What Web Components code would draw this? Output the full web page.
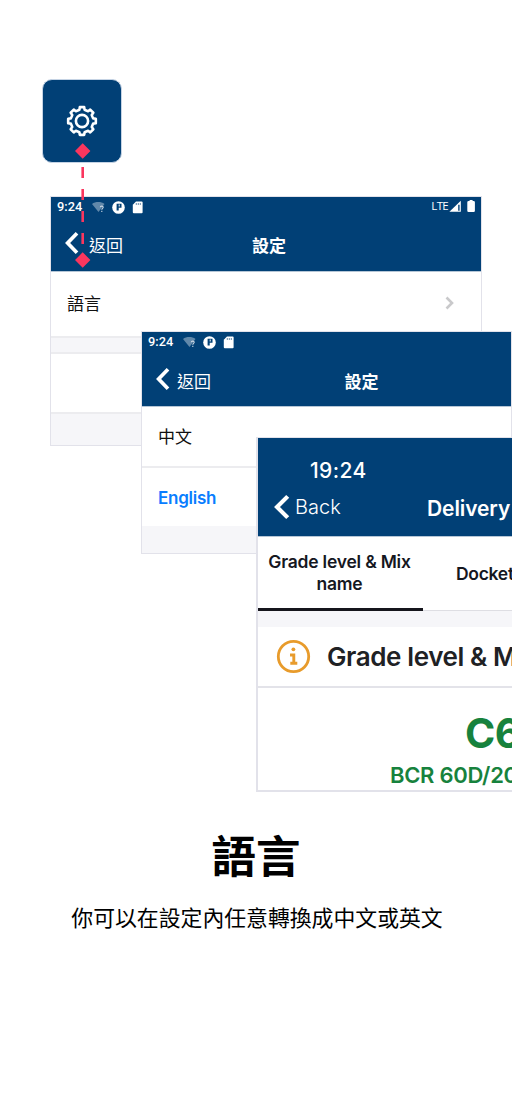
<!DOCTYPE html>
<html lang="zh-Hant">
<head>
<meta charset="utf-8">
<title>語言</title>
<style>
html,body{margin:0;background:#fff}
body{width:512px;height:1108px;overflow:hidden}
</style>
</head>
<body>
<language-guide></language-guide>
<script>
const define = (name, html) => customElements.define(name, class extends HTMLElement {
  constructor() {
    super();
    this.attachShadow({mode: 'open'}).innerHTML = html;
  }
});

define('settings-tile', `<style>
:host{box-sizing:border-box;display:flex;justify-content:center;width:80px;height:84px;padding-top:25px;border:1px solid #c5d3e4;border-radius:10px;background:#014076}
svg{width:32px;height:32px}</style>
<svg viewBox="-16 -16 32 32" fill="none" stroke="#fff" stroke-width="2.6" stroke-linejoin="round"><circle r="6.1"/><path id="gear"/></svg>`);

define('status-icons', `<style>
:host{display:flex;align-items:center;gap:7px}svg{display:block}</style>
<svg width="13" height="12" viewBox="0 0 13 12"><path d="M0 3C3.5 .4 9 .4 12.5 3L6.5 11z" fill="#fff" opacity=".38"/><path d="M8.3 6.3c0-1.6 2.9-1.6 2.9 0 0 1.1-1.4 1.2-1.4 2.4M9.8 9.7v1.2" fill="none" stroke="#c8d5e2" stroke-width="1.1"/></svg>
<svg width="13" height="13" viewBox="0 0 13 13"><circle cx="6.5" cy="6.5" r="6.3" fill="#fff"/><path d="M4.6 2.7h4.9v4.1H6.7v2.8H4.6z" fill="#014076"/><path d="M6.7 3.6h1v2h-1z" fill="#fff"/></svg>
<svg width="12" height="13" viewBox="0 0 12 13"><path d="M4 .5h5.6q1 0 1 1v9.7q0 1-1 1H1.8q-1 0-1-1V3.7z" fill="#fff"/><path d="M4.3 2v2M6.3 2v2M8.3 2v2" stroke="#6a8cab" stroke-width="1"/></svg>`);

define('signal-icons', `<style>
:host{display:flex;align-items:center;color:#fff;font:11.5px/14px "Open Sans","Noto Sans",sans-serif;letter-spacing:-.7px}svg{display:block}span{position:relative;top:-1px}</style>
<span>LTE</span><svg width="13" height="13" viewBox="0 0 13 13" style="margin:0 5px 1px 1px"><path d="M11.8 .8v11H.4z" fill="#fff"/><path d="M9.2 4.8h1.4v6H9.2z" fill="#014076"/></svg><svg width="9" height="13" viewBox="0 0 9 13" style="margin-bottom:2px"><path d="M2.6 0h3v1h1q1.3 0 1.3 1.2v8.6q0 1.2-1.2 1.2H1.5Q.3 12 .3 10.8V2.2Q.3 1 1.6 1h1z" fill="#fff"/></svg>`);

define('back-chevron', `<style>:host{display:block;width:14px;height:24px}svg{display:block;width:100%;height:100%}</style>
<svg viewBox="0 0 14 24" preserveAspectRatio="none"><path d="M12 2.2L2.6 12l9.4 9.8" fill="none" stroke="#fff" stroke-width="3.7"/></svg>`);

define('android-header', `<style>
:host{display:block;height:75px;background:#014076;color:#fff;border-bottom:1px solid #b5c6d6;box-sizing:border-box}
.status{display:flex;align-items:center;height:20px;padding:0 5px 0 6px;font:500 12.8px/20px Roboto,sans-serif}
status-icons{margin-left:10px}::slotted([slot=signal]){margin-left:auto}
.nav{display:grid;grid-template-columns:1fr auto 1fr;align-items:center;height:54px;font:17px/25px "Noto Sans CJK TC",sans-serif;padding:var(--nav-pad,0) 0 0 14px}
.back{display:flex;align-items:center;gap:var(--back-gap,10px)}
back-chevron{margin-bottom:2px}
.title{font-weight:700;margin-left:var(--title-shift,-8px)}
</style><div class="status"><span>9:24</span><status-icons></status-icons><slot name="signal"></slot></div>
<div class="nav"><div class="back"><back-chevron></back-chevron><slot name="back"></slot></div><div class="title"><slot name="title"></slot></div></div>`);

define('list-row', `<style>
:host{box-sizing:border-box;display:flex;align-items:center;justify-content:space-between;height:var(--h,65px);padding:0 27px 2px 16px;background:#fff;color:#101010;font:17px/25px "Noto Sans CJK TC",sans-serif}
:host([selected]){color:#087dff;font:600 17px/20px Inter,sans-serif;letter-spacing:-.25px;padding-bottom:0;padding-top:2px}
:host([line]){border-bottom:2px solid #ececef}
</style><slot></slot><slot name="end"></slot>`);

define('section-gap', `<style>:host{display:block;box-sizing:border-box;height:var(--h,16px);background:#f6f6f9}
:host([line]){border-bottom:2px solid #ececef}</style>`);

define('settings-screen', `<style>
:host{position:absolute;box-sizing:border-box;left:50px;top:196px;width:432px;height:250px;border:1px solid #e2e2ea;background:#f6f6f9}
svg{display:block;width:9px;height:14px}.label{margin-top:-2px}</style>
<android-header><signal-icons slot="signal"></signal-icons><span slot="back">返回</span><span slot="title">設定</span></android-header>
<list-row line style="--h:66px"><span class="label">語言</span><svg slot="end" viewBox="0 0 9 14"><path d="M1.5 1.5L7 7l-5.5 5.5" fill="none" stroke="#c9c9cb" stroke-width="2.6"/></svg></list-row>
<section-gap line></section-gap>
<list-row line style="--h:60px"></list-row>`);

define('language-screen', `<style>
:host{position:absolute;box-sizing:border-box;left:141px;top:331px;width:371px;height:223px;border:1px solid #e2e2ea;background:#f6f6f9}
android-header{--title-shift:56px;--back-gap:7px;--nav-pad:1px}</style>
<android-header><span slot="back">返回</span><span slot="title">設定</span></android-header>
<list-row line style="--h:61px">中文</list-row>
<list-row selected style="--h:58px">English</list-row>`);

define('delivery-screen', `<style>
:host{position:absolute;box-sizing:border-box;left:256px;top:437px;width:560px;height:355px;border:2px solid #e2e2ea;border-width:1px 2px 2px;background:#fff;font-family:Inter,sans-serif;color:#15171f}
header{box-sizing:border-box;height:99px;background:#014076;color:#fff;border-bottom:1px solid #b5c6d6;padding:20px 0 0 16px}
.time{font-size:21px;line-height:26px;font-weight:500;padding-left:36px;letter-spacing:.4px}
.nav{display:flex;align-items:center;height:46px}
.nav back-chevron{width:16px;height:26px}
.back{font-size:20px;font-weight:300;margin-left:5px;width:132px;letter-spacing:0}
.nav b{font-size:21px;font-weight:600;letter-spacing:-.1px;margin-top:3px}
.tabs{display:grid;grid-template-columns:165px 165px;height:74px;box-sizing:border-box;border-bottom:1px solid #dedee3;font-size:17.5px;line-height:22px;font-weight:600;letter-spacing:-.22px}
.tab{display:flex;align-items:center;justify-content:center;text-align:center}
.tab:not(.on){justify-content:start;padding-left:33px;letter-spacing:-.3px}
.tab.on{box-sizing:border-box;border-bottom:3px solid #15151c;height:74px;padding:0 2px 0 0}
.heading{display:flex;align-items:center;gap:16px;box-sizing:border-box;height:61px;border-bottom:2px solid #e3e3e9;padding-left:18px;font-size:26px;font-weight:600;letter-spacing:-.4px;color:#202124;white-space:nowrap}
.heading svg{width:35px;height:35px;flex:none}
.mix{color:#17823d;padding:20px 0 0 132px;font-weight:600;white-space:nowrap}
.grade{font-size:41px;line-height:50px;padding-left:75px;letter-spacing:-.5px;font-weight:700}
.code{font-size:22px;line-height:28px;margin-top:3px;letter-spacing:-.3px}
</style>
<header><div class="time">19:24</div><div class="nav"><back-chevron></back-chevron><span class="back">Back</span><b>Delivery</b></div></header>
<div class="tabs"><div class="tab on">Grade level &amp; Mix<br>name</div><div class="tab">Docket</div></div>
<section-gap style="--h:16px"></section-gap>
<div class="heading"><svg viewBox="0 0 35 35"><g fill="none" stroke="#e89b2b" stroke-width="2.8"><circle cx="17.5" cy="17.5" r="15.2"/><path d="M14 16h3.8v7.5M14.3 24.2h7" stroke-width="2.9"/></g><circle cx="17.4" cy="10.3" r="1.9" fill="#e89b2b"/></svg><span>Grade level &amp; M</span></div>
<div class="mix"><div class="grade">C6</div><div class="code">BCR 60D/20</div></div>`);

define('language-guide', `<style>
:host{display:block;position:relative;width:512px;height:1108px;overflow:hidden;background:#fff}
.stage{height:822px;box-sizing:border-box;padding:79px 0 0 42px}
.link{position:absolute;left:74px;top:142px;width:17px;height:126px}
.copy{text-align:center;color:#000;font-family:"Noto Sans CJK TC",sans-serif}
h1{font-size:44.5px;line-height:64px;font-weight:700;margin:0}
p{font-size:21.85px;line-height:32px;margin:15px 0 0;padding-left:2px;white-space:nowrap}
</style>
<div class="stage"><settings-tile></settings-tile><settings-screen></settings-screen><language-screen></language-screen><delivery-screen></delivery-screen>
<svg class="link" viewBox="0 0 17 126"><path d="M8.7 25V118" stroke="#fa365e" stroke-width="2.6" stroke-dasharray="11 11"/><path d="M8.7 1.3L16.4 9l-7.7 7.7L1 9zM8.7 110.3l7.7 7.7-7.7 7.7L1 118z" fill="#fa365e"/></svg></div>
<div class="copy"><h1>語言</h1><p>你可以在設定內任意轉換成中文或英文</p></div>`);

/* Eight-toothed gear outline, generated around the origin. */
const guide = document.querySelector('language-guide');
const gear = guide.shadowRoot.querySelector('settings-tile').shadowRoot.querySelector('#gear');
const points = [];
for (let i = 0; i < 8; i++) {
  const a = i * 45;
  for (const [offset, radius] of [[-9, 14], [9, 14], [13, 11.5], [22.5, 11.3], [32, 11.5]]) {
    const t = (a + offset) * Math.PI / 180;
    points.push((radius * Math.sin(t)).toFixed(2) + ' ' + (-radius * Math.cos(t)).toFixed(2));
  }
}
gear.setAttribute('d', 'M' + points.join('L') + 'Z');
</script>
</body>
</html>
